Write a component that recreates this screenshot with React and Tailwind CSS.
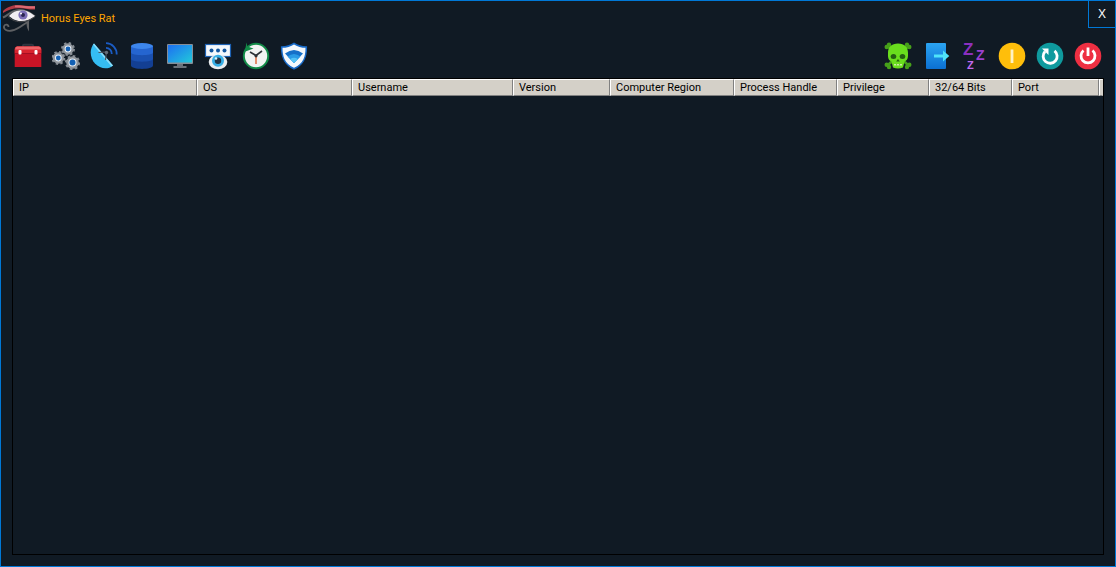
import { useState } from 'react';

const columns = [
  { name: 'IP', width: 'w-[184px]' },
  { name: 'OS', width: 'w-[155px]' },
  { name: 'Username', width: 'w-[161px]' },
  { name: 'Version', width: 'w-[97px]' },
  { name: 'Computer Region', width: 'w-[124px]' },
  { name: 'Process Handle', width: 'w-[103px]' },
  { name: 'Privilege', width: 'w-[92px]' },
  { name: '32/64 Bits', width: 'w-[83px]' },
  { name: 'Port', width: 'w-[87px]' },
];

function EyeLogo() {
  return (
    <svg width="34" height="30" viewBox="0 1 34 30" fill="none" aria-hidden="true">
      <path d="M1 8C6 3 13 1.500 20 2.200C26 2.800 30 3.500 33 3.200V6.500C28 7 24 5.500 18 5.200C11 5 6 7 1 10Z" fill="#b03a45" />
      <path d="M13 2.500C20 2 27 3.800 33 3.200V5.500C26 6 20 4.200 13 4.200Z" fill="#dc6a72" />
      <path d="M1 14.500C6 12.500 9 7.500 17 7C25 6.500 28 10.500 33 13.500" stroke="#5e6063" strokeWidth="2" />
      <path d="M7 13C11 8.500 15 7.500 20 7.500C26 7.500 29 10 33 13C29 16 25 18 19 18C13 18 10 15.500 7 13Z" fill="#f1eef2" />
      <circle cx="21" cy="12" r="4.600" fill="#7d70b8" />
      <circle cx="21" cy="12" r="2" fill="#2b2552" />
      <circle cx="19" cy="10.500" r="1" fill="#fff" />
      <path d="M6 13.500C10 17.500 15 19 20 18.800C26 18.500 29 16.500 33 13.500" stroke="#4c4d50" strokeWidth="1" />
      <path d="M27 18.500C22 20 18 26 10 27.500C5 28.500 1.500 26.500 2 23.500C2.500 21 6.500 21 6.500 24" stroke="#5e6063" strokeWidth="1.800" />
      <path d="M27 18V28.500C25.500 26 24.500 24 24.500 19Z" fill="#5e6063" />
    </svg>
  );
}

function Icon({ children }) {
  return (
    <svg width="28" height="28" viewBox="0 0 28 28" fill="none" aria-hidden="true">
      {children}
    </svg>
  );
}

function ToolboxIcon() {
  return (
    <Icon>
      <path d="M9 5V3.500Q9 2.800 10 2.800H18Q19 2.800 19 3.500V5" stroke="#30353f" strokeWidth="2" />
      <path d="M3 4.500H25Q27 4.500 27.300 7V25H.700V7Q1 4.500 3 4.500Z" fill="#c81426" />
      <path d="M3 4.500H25Q27 4.500 27.300 7V11H.700V7Q1 4.500 3 4.500Z" fill="#d8242f" />
      <path d="M3 4.500H25Q26.500 4.500 27 7.500H1Q1.500 4.500 3 4.500Z" fill="#ee6468" />
      <path d="M.700 11.500H27.300" stroke="#a50f22" />
      <rect x="4.500" y="8" width="3" height="4.500" rx="1" fill="#fff" />
      <rect x="20.500" y="8" width="3" height="4.500" rx="1" fill="#fff" />
    </Icon>
  );
}

function Gear({ x, y, r }) {
  return (
    <g>
      <circle cx={x} cy={y} r={r - 1} stroke="#858b92" strokeWidth="2" strokeDasharray={`${(2 * Math.PI * (r - 1)) / 16}`} />
      <circle cx={x} cy={y} r={r - 1.3} fill="#8e949b" />
      <circle cx={x} cy={y} r={r - 3.6} fill="#e8eef5" />
      <circle cx={x} cy={y} r={r - 4.6} fill="#1260b4" />
    </g>
  );
}

function GearsIcon() {
  return (
    <Icon>
      <Gear x={16} y={7} r={7} />
      <Gear x={6.3} y={16} r={7} />
      <Gear x={20.5} y={20.5} r={7.6} />
    </Icon>
  );
}

function SatelliteIcon() {
  return (
    <Icon>
      <path d="M4 1.500C-1 7 0 16 5 21.500C10 27 18 28 23 23.500Z" fill="#35bdf2" />
      <path d="M4 1.500L23 23.500L21.500 24.500L3 2.500Z" fill="#8adcf8" />
      <path d="M8.500 10.500L16.500 10L15.500 18" stroke="#4b535d" strokeWidth="1.200" />
      <circle cx="16.500" cy="10.500" r="1.700" fill="#646c77" />
      <path d="M16 5.800A6 6 0 0 1 21.800 12M16 1.200A10.800 10.800 0 0 1 26.700 12.500" stroke="#1b5cc4" strokeWidth="1.800" />
    </Icon>
  );
}

function DatabaseIcon() {
  return (
    <Icon>
      <path d="M3 17V23.500C3 28 25 28 25 23.500V17Z" fill="#133f93" />
      <path d="M3 10V17C3 20.500 25 20.500 25 17V10Z" fill="#1a50b0" />
      <path d="M3 4V10.500C3 14 25 14 25 10.500V4Z" fill="#2565d0" />
      <ellipse cx="14" cy="4" rx="11" ry="3" fill="#3d86ec" />
    </Icon>
  );
}

function MonitorIcon() {
  return (
    <Icon>
      <defs>
        <linearGradient id="screen" x1="0" y1="0" x2="1" y2="1">
          <stop offset="0" stopColor="#1d6ff2" />
          <stop offset="1" stopColor="#22c9da" />
        </linearGradient>
      </defs>
      <path d="M11 21H17V24H20.500V26H7.500V24H11Z" fill="#6a727b" />
      <rect x="1" y="2" width="26" height="20" rx="1" fill="#858d96" />
      <rect x="2" y="3" width="24" height="17.500" fill="url(#screen)" />
    </Icon>
  );
}

function PasswordIcon() {
  return (
    <Icon>
      <rect x="1.500" y="2.500" width="25" height="12" fill="#f4f8fc" stroke="#1d62b4" strokeWidth="1.200" />
      <circle cx="7.500" cy="8.500" r="2" fill="#11559f" />
      <circle cx="14" cy="8.500" r="2" fill="#11559f" />
      <circle cx="20.500" cy="8.500" r="2" fill="#11559f" />
      <ellipse cx="14" cy="20" rx="9.300" ry="7.300" fill="#e9edf0" />
      <circle cx="14" cy="18.800" r="6" fill="#35aee6" />
      <circle cx="14" cy="18.800" r="3.200" fill="#223344" />
      <circle cx="12" cy="16.500" r="1.300" fill="#d8f2fc" />
    </Icon>
  );
}

function ClockIcon() {
  return (
    <Icon>
      <circle cx="14" cy="14" r="12.200" fill="#f2f3f2" stroke="#128a47" strokeWidth="2" />
      <path d="M8 10L14 13.500L20 9" stroke="#2d3136" strokeWidth="1.600" />
      <path d="M14 14V22" stroke="#e58d6d" strokeWidth="2" />
      <circle cx="14" cy="13.800" r="1.600" fill="#2d3136" />
      <path d="M4.500 .500L5.500 4.500L11.500 6.500L2.800 9.800Z" fill="#128a47" />
    </Icon>
  );
}

function ShieldIcon() {
  return (
    <Icon>
      <path d="M14 1.500C17 3.500 21 5 26.300 5C26.500 14 24.500 22 14 26.800C3.500 22 1.500 14 1.700 5C7 5 11 3.500 14 1.500Z" fill="#f4f8fc" stroke="#1668c6" strokeWidth="1.600" />
      <path d="M5 11.500Q14 4.500 23 11.500L14 21Z" fill="#1670c8" />
      <path d="M7.500 14.500Q14 9.500 20.500 14.500L14 21Z" fill="#2a9be6" />
      <path d="M10 17.200Q14 14.500 18 17.200L14 21Z" fill="#55c3f5" />
    </Icon>
  );
}

function SkullIcon() {
  return (
    <Icon>
      <path d="M4 4.500L24 23M24 4.500L4 23" stroke="#46a01a" strokeWidth="2.600" />
      <g fill="#46a01a">
        <circle cx="2.700" cy="5" r="2.200" />
        <circle cx="5" cy="2.800" r="2.200" />
        <circle cx="25.300" cy="5" r="2.200" />
        <circle cx="23" cy="2.800" r="2.200" />
        <circle cx="2.700" cy="22.800" r="2.200" />
        <circle cx="5" cy="25" r="2.200" />
        <circle cx="25.300" cy="22.800" r="2.200" />
        <circle cx="23" cy="25" r="2.200" />
      </g>
      <path d="M14 1.500C20.500 1.500 24 5 24 11C24 14 24.500 18 20.500 19.500L19 25.500Q14 27.500 9 25.500L7.500 19.500C3.500 18 4 14 4 11C4 5 7.500 1.500 14 1.500Z" fill="#69dd1d" />
      <ellipse cx="9.500" cy="14.500" rx="2.800" ry="2.500" fill="#245e12" />
      <ellipse cx="18.500" cy="14.500" rx="2.800" ry="2.500" fill="#245e12" />
      <path d="M14 17L15.800 19.500H12.200Z" fill="#245e12" />
      <path d="M10 22H18V23.500H10Z" fill="#c9ee9e" />
      <path d="M12.500 22V23.500M15.500 22V23.500" stroke="#5cbb22" strokeWidth=".8" />
    </Icon>
  );
}

function ExitIcon() {
  return (
    <Icon>
      <defs>
        <linearGradient id="door" x1="0" y1="0" x2="0" y2="1">
          <stop offset="0" stopColor="#2ba4f2" />
          <stop offset="1" stopColor="#0b70d2" />
        </linearGradient>
      </defs>
      <rect x="4" y="1" width="20" height="26" rx="1" fill="url(#door)" />
      <path d="M12 12.500H21V8.500L27.300 14L21 19.500V15.500H12Z" fill="#4fe3fa" />
    </Icon>
  );
}

function SleepIcon() {
  return (
    <svg width="28" height="28" viewBox="0 0 28 28" className="overflow-visible font-['Liberation_Sans',sans-serif] font-bold" aria-hidden="true">
      <text x="3" y="13" fontSize="17" fill="#8b2fbf">Z</text>
      <text x="16" y="18" fontSize="14" fill="#9a40cf">Z</text>
      <text x="7" y="27" fontSize="11" fill="#c26bf0">Z</text>
    </svg>
  );
}

function SuspendIcon() {
  return (
    <Icon>
      <circle cx="14" cy="14" r="13.300" fill="#ffbe0b" />
      <path d="M14 7.500V21" stroke="#fff2c4" strokeWidth="2.800" />
    </Icon>
  );
}

function RestartIcon() {
  return (
    <Icon>
      <circle cx="14" cy="14" r="13.300" fill="#0f9a9e" />
      <path d="M9 9.500A7 7 0 1 0 18.500 8.800" stroke="#fff" strokeWidth="2.800" />
      <path d="M6 6.500H12.500V13Z" fill="#fff" />
    </Icon>
  );
}

function PowerIcon() {
  return (
    <Icon>
      <circle cx="14" cy="14" r="13.300" fill="#ee2f42" />
      <path d="M9.500 8.500A7 7 0 1 0 18.500 8.500" stroke="#fff" strokeWidth="2.800" />
      <path d="M14 5.500V14" stroke="#fff" strokeWidth="2.800" />
    </Icon>
  );
}

const leftTools = [
  { label: 'Builder', icon: ToolboxIcon },
  { label: 'Settings', icon: GearsIcon },
  { label: 'Listener', icon: SatelliteIcon },
  { label: 'Data', icon: DatabaseIcon },
  { label: 'Screen', icon: MonitorIcon },
  { label: 'Privacy', icon: PasswordIcon },
  { label: 'History', icon: ClockIcon },
  { label: 'Protection', icon: ShieldIcon },
];

const rightTools = [
  { label: 'Skull', icon: SkullIcon },
  { label: 'Log off', icon: ExitIcon },
  { label: 'Sleep', icon: SleepIcon },
  { label: 'Suspend', icon: SuspendIcon },
  { label: 'Restart', icon: RestartIcon },
  { label: 'Shut down', icon: PowerIcon },
];

function ToolGroup({ tools, active, onSelect }) {
  return (
    <div className="flex">
      {tools.map(({ label, icon: ToolIcon }) => (
        <button
          key={label}
          type="button"
          aria-label={label}
          aria-pressed={active === label}
          onClick={() => onSelect(label)}
          className="flex h-[38px] w-[38px] items-center justify-center"
        >
          <ToolIcon />
        </button>
      ))}
    </div>
  );
}

export default function App() {
  const [active, setActive] = useState('');

  return (
    <div className="flex min-h-screen flex-col border border-[#0078d7] bg-[#101a24] font-[Roboto,Arial,sans-serif] text-[11px]">
      <header className="flex h-9 items-start justify-between">
        <div className="flex h-9 items-center gap-[5px] pl-px">
          <EyeLogo />
          <h1 className="text-[#ffa500]">Horus Eyes Rat</h1>
        </div>
        <button
          type="button"
          aria-label="Close"
          className="h-[27px] w-[27px] border-b border-l border-[#0078d7] font-['Liberation_Sans',Arial,sans-serif] text-xs text-white"
        >
          X
        </button>
      </header>

      <nav className="flex justify-between px-2">
        <ToolGroup tools={leftTools} active={active} onSelect={setActive} />
        <ToolGroup tools={rightTools} active={active} onSelect={setActive} />
      </nav>

      <main className="mx-[11px] mt-[3px] mb-[11px] flex-1 border border-black">
        <table className="w-full table-fixed border-separate border-spacing-0">
          <thead>
            <tr>
              {columns.map((col) => (
                <th
                  key={col.name}
                  scope="col"
                  className={`h-[17px] border border-t-white border-r-[#808080] border-b-[#808080] border-l-white bg-[#d4d0c8] p-0 pt-px pl-[5px] text-left leading-[14px] font-normal text-black ${col.width}`}
                >
                  {col.name}
                </th>
              ))}
              <td className="border border-t-white border-r-[#d4d0c8] border-b-[#808080] border-l-white bg-[#d4d0c8] p-0" />
            </tr>
          </thead>
          <tbody />
        </table>
      </main>
    </div>
  );
}
